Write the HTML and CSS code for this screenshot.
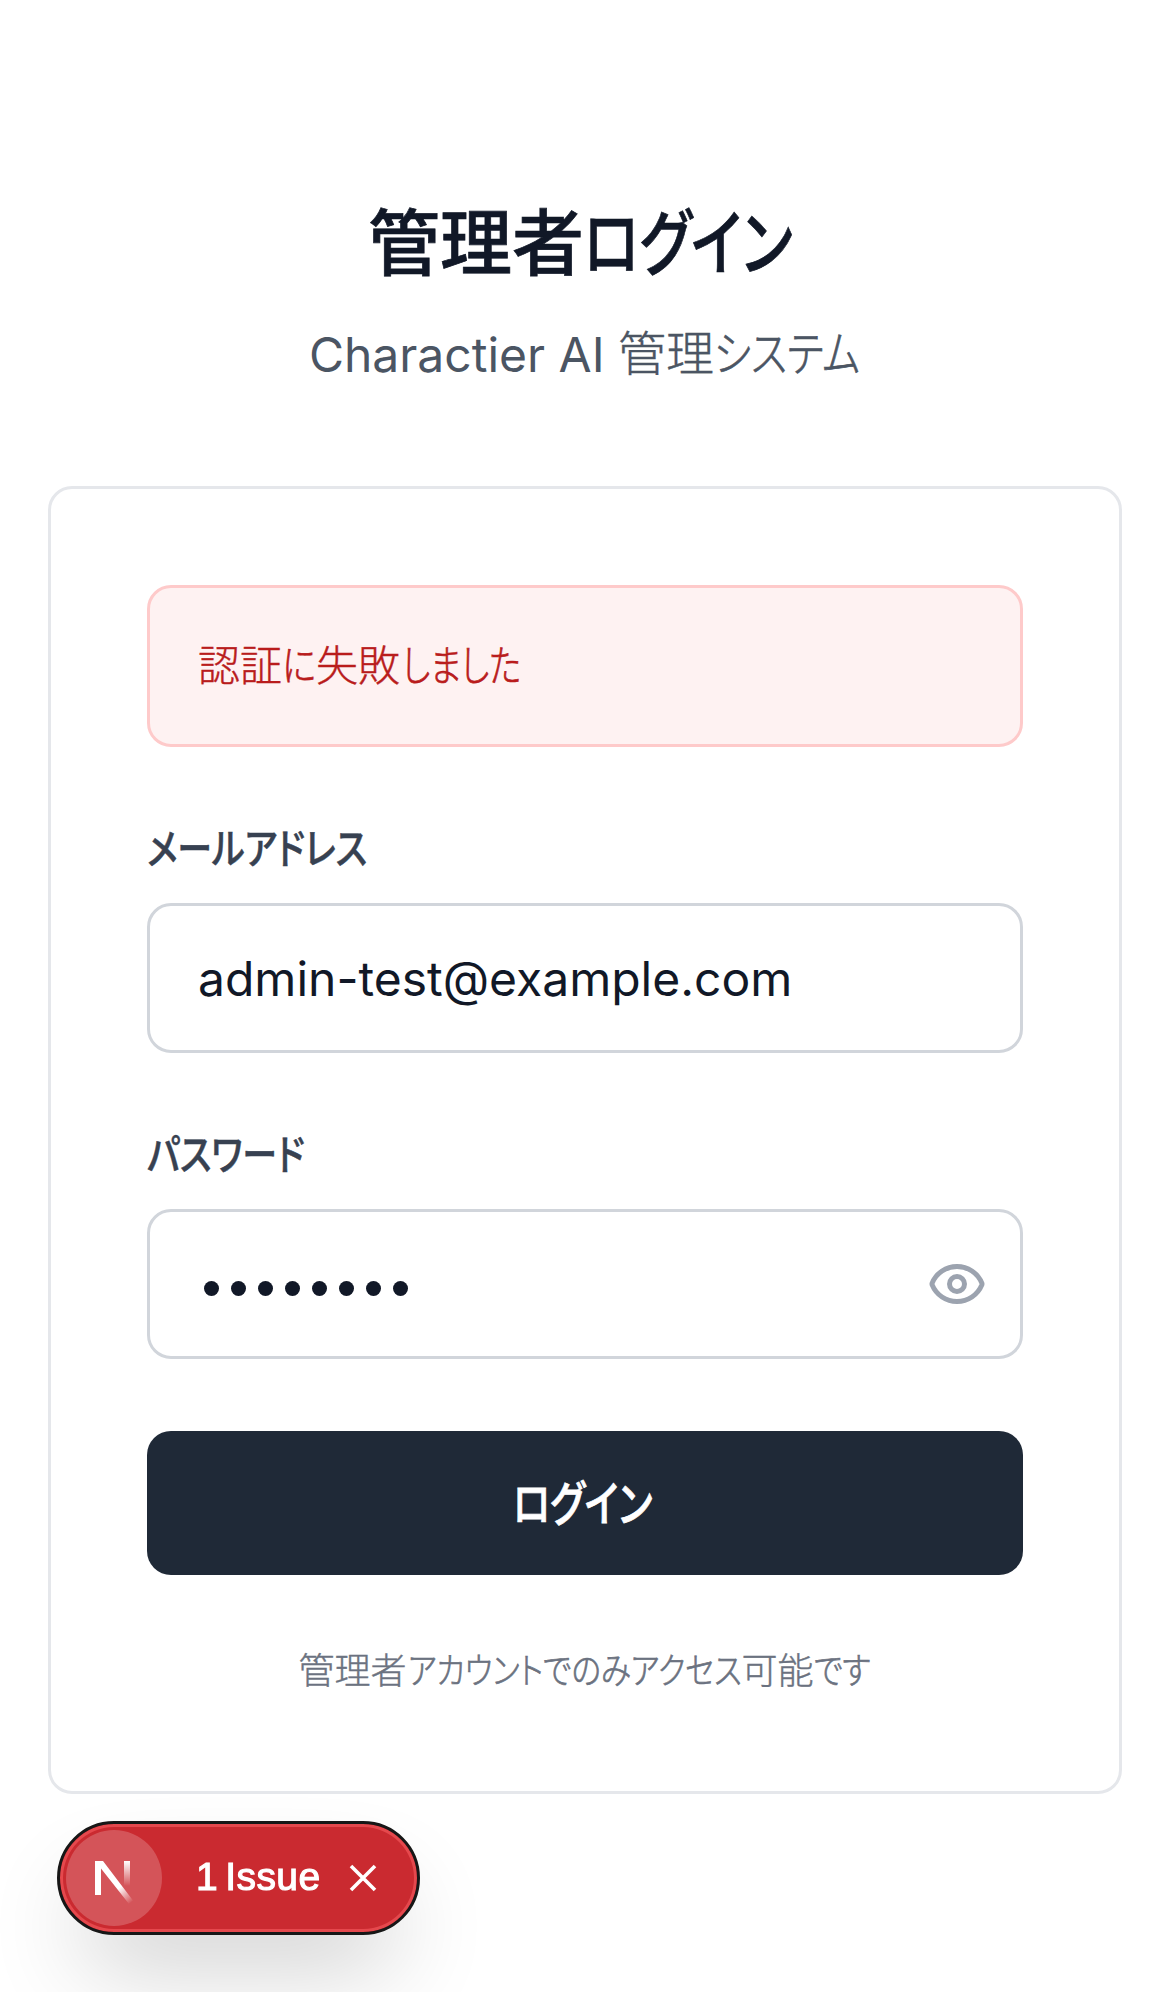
FILE: index.html
```html
<!DOCTYPE html>
<html lang="ja">
<head>
<meta charset="utf-8">
<title>管理者ログイン</title>
<link rel="stylesheet" href="styles.css">
</head>
<body>
<main class="page">
  <header class="header">
    <h1 class="title">管理者<span class="kana kana-title">ログイン</span></h1>
    <p class="subtitle"><span class="latin">Charactier AI </span><span class="jp">管理<span class="kana kana-subtitle">システム</span></span></p>
  </header>
  <form class="card">
    <div class="alert jp">認証<span class="kana kana-ni">に</span>失敗<span class="kana kana-shimashita">しました</span></div>
    <div class="field">
      <label class="label"><span class="kana kana-label">メールアドレス</span></label>
      <div class="input"><span class="latin">admin-test@example.com</span></div>
    </div>
    <div class="field">
      <label class="label"><span class="kana kana-label">パスワード</span></label>
      <div class="input password">
        <span class="dots"><i></i><i></i><i></i><i></i><i></i><i></i><i></i><i></i></span>
        <svg class="eye" viewBox="0 0 24 24"><path d="M2.062 12.348a1 1 0 0 1 0-.696 10.75 10.75 0 0 1 19.876 0 1 1 0 0 1 0 .696 10.75 10.75 0 0 1-19.876 0"/><circle cx="12" cy="12" r="3"/></svg>
      </div>
    </div>
    <button class="button" type="button"><span class="kana kana-button">ログイン</span></button>
    <p class="note jp">管理者<span class="kana kana-note">アカウントでのみアクセス</span>可能<span class="kana kana-desu">です</span></p>
  </form>
</main>
<aside class="issue">
  <span class="logo">
    <svg viewBox="0 0 96 96">
      <defs>
        <linearGradient id="diagonal" gradientUnits="userSpaceOnUse" x1="53" y1="58" x2="65" y2="73"><stop offset="0" stop-color="#fff"/><stop offset="1" stop-color="#fff" stop-opacity="0"/></linearGradient>
        <linearGradient id="stem" gradientUnits="userSpaceOnUse" x1="0" y1="31" x2="0" y2="56"><stop offset="0" stop-color="#fff"/><stop offset="1" stop-color="#fff" stop-opacity="0"/></linearGradient>
      </defs>
      <path fill="url(#stem)" d="M58 31h6v25h-6z"/>
      <path fill="url(#diagonal)" d="M29 31h8L67 70.500l-4.200 3.300L35 38.500V65h-6z"/>
    </svg>
  </span>
  <span class="issue-text">1 Issue</span>
  <svg class="close" viewBox="0 0 28 28"><path d="M2 2l24 24M26 2L2 26"/></svg>
</aside>
</body>
</html>
```
FILE: styles.css
```css
* { box-sizing: border-box; margin: 0; padding: 0; }
body { background: #fff; font-family: Inter, "Noto Sans CJK JP", sans-serif; font-size: 48px; line-height: 72px; color: #111827; overflow: hidden; }
.page { padding: 198px 48px 0; }
.header { text-align: center; margin-bottom: 96px; }
.title { font-size: 72px; line-height: 96px; font-weight: 500; margin-bottom: 24px; -webkit-text-stroke: 0.7px; position: relative; top: -3px; left: -1px; }
.subtitle { color: #4b5563; white-space: pre; position: relative; left: -0.5px; }
.latin { position: relative; top: 1px; }
.jp { font-weight: 300; -webkit-text-stroke: 0.4px; }

/* Condensed proportional kana: box width and horizontal scale are set per label */
.kana { display: inline-block; white-space: nowrap; text-align: left; font-feature-settings: "palt"; transform-origin: 0 50%; }
.jp .kana { -webkit-text-stroke: 0.7px; }
.kana-title { width: 216px; transform: translateX(-0.3px) scaleX(0.794); }
.kana-subtitle { width: 146px; transform: scaleX(0.835); }
.kana-ni { width: 34px; transform: scaleX(0.84); }
.kana-shimashita { width: 120px; transform: translateX(2px) scaleX(0.795); }
.kana-label { transform: scaleX(0.832); -webkit-text-stroke: 0.5px; }
.kana-button { width: 144px; transform: translateY(1px) scaleX(0.795); -webkit-text-stroke: 0.8px; }
.kana-note { width: 335px; transform: translateX(1px) scaleX(0.85); }
.kana-desu { width: 58px; transform: scaleX(0.857); }

.card { border: 3px solid #e5e7eb; border-radius: 24px; padding: 96px; display: flex; flex-direction: column; gap: 72px; }
.alert { height: 162px; border: 3px solid #fecaca; background: #fef2f2; color: #b91c1c; border-radius: 24px; padding: 48px; font-size: 42px; line-height: 60px; }
.field { display: flex; flex-direction: column; gap: 24px; }
.label { height: 60px; font-size: 42px; line-height: 60px; font-weight: 500; color: #374151; }
.input { height: 150px; border: 3px solid #d1d5db; border-radius: 24px; padding: 36px 48px; }
.password { display: flex; align-items: center; justify-content: space-between; padding-right: 33px; }
.dots { display: flex; gap: 12px; padding: 8px 0 0 6px; }
.dots i { width: 15px; height: 15px; border-radius: 50%; background: #111827; }
.eye { width: 60px; height: 60px; fill: none; stroke: #9ca3af; stroke-width: 2; stroke-linecap: round; stroke-linejoin: round; }
.button { height: 144px; border: 0; border-radius: 24px; background: #1f2937; color: #fff; font: inherit; font-weight: 500; }
.note { text-align: center; font-size: 36px; line-height: 48px; color: #6b7280; white-space: nowrap; }

.issue { position: fixed; left: 57px; top: 1821px; width: 363px; height: 114px; border: 3px solid #171717; border-radius: 57px; background: #ca2a30; box-shadow: inset 0 0 0 3px #e5484d, 0 48px 96px -24px rgba(0, 0, 0, 0.24); display: flex; align-items: center; padding-left: 6px; color: #fff; }
.logo { width: 96px; height: 96px; border-radius: 50%; background: rgba(255, 255, 255, 0.2); }
.logo svg { display: block; }
.issue-text { width: 152px; padding-left: 34px; font: 39px/108px "Liberation Sans", sans-serif; letter-spacing: 0.4px; word-spacing: -4px; -webkit-text-stroke: 1.1px; white-space: nowrap; position: relative; top: -1px; }
.close { width: 28px; height: 28px; margin-left: 35px; fill: none; stroke: #fff; stroke-width: 3.6; }
```
